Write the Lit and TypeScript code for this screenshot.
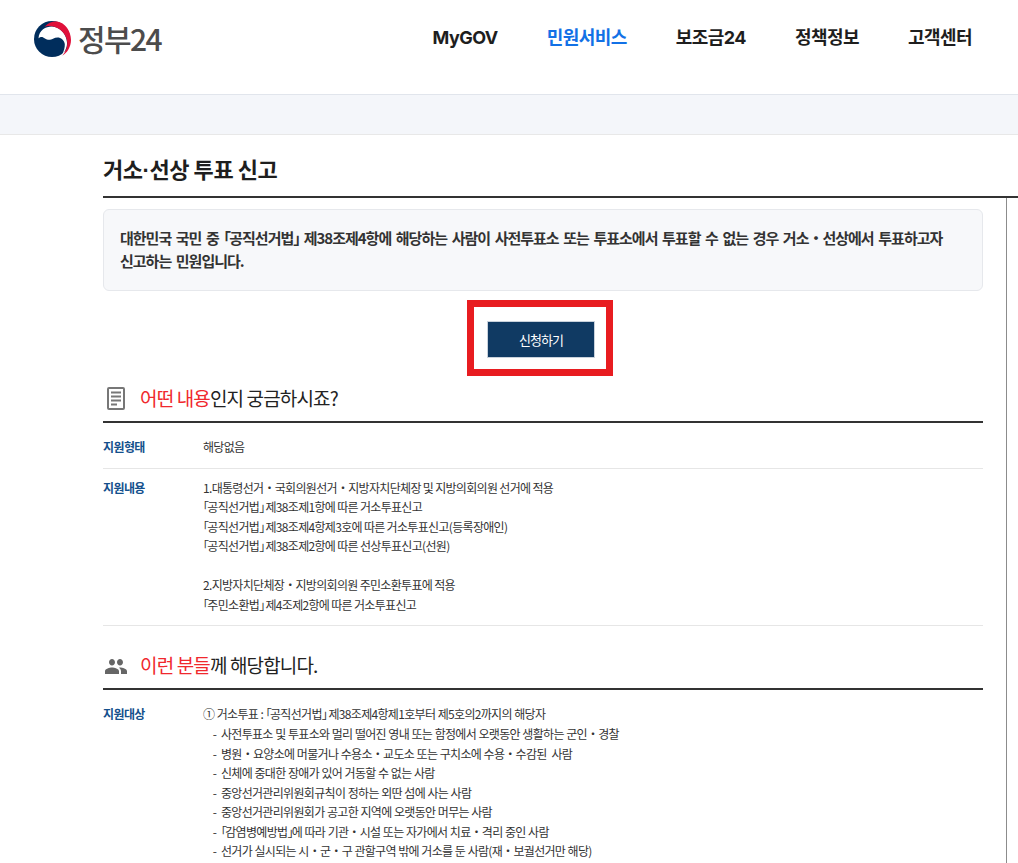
import { LitElement, html, css } from "lit";
import { customElement } from "lit/decorators.js";

const SUPPORT = [
  "1.대통령선거・국회의원선거・지방자치단체장 및 지방의회의원 선거에 적용",
  "「공직선거법」 제38조제1항에 따른 거소투표신고",
  "「공직선거법」 제38조제4항제3호에 따른 거소투표신고(등록장애인)",
  "「공직선거법」 제38조제2항에 따른 선상투표신고(선원)",
  "",
  "2.지방자치단체장・지방의회의원 주민소환투표에 적용",
  "「주민소환법」 제4조제2항에 따른 거소투표신고",
];
const TARGET = [
  "① 거소투표 : 「공직선거법」 제38조제4항제1호부터 제5호의2까지의 해당자",
  "    -  사전투표소 및 투표소와 멀리 떨어진 영내 또는 함정에서 오랫동안 생활하는 군인・경찰",
  "    -  병원・요양소에 머물거나 수용소・교도소 또는 구치소에 수용・수감된  사람",
  "    -  신체에 중대한 장애가 있어 거동할 수 없는 사람",
  "    -  중앙선거관리위원회규칙이 정하는 외딴 섬에 사는 사람",
  "    -  중앙선거관리위원회가 공고한 지역에 오랫동안 머무는 사람",
  "    -  「감염병예방법」에 따라 기관・시설 또는 자가에서 치료・격리 중인 사람",
  "    -  선거가 실시되는 시・군・구 관할구역 밖에 거소를 둔 사람(재・보궐선거만 해당)",
];

/** Renders a line with its corner brackets at half width, as the reference sets them. */
const brk = (s: string) =>
  s.split(/([「」])/).map((p) => (p === "「" || p === "」" ? html`<span class="br">${p}</span>` : p));

@customElement("app-root")
export class AppRoot extends LitElement {
  static styles = css`
    :host {
      display: block;
      height: 863px;
      overflow: hidden;
      background: #fff;
      font-family: "Noto Sans CJK KR", "Noto Sans", sans-serif;
      color: #1e1e1e;
    }
    .br { font-feature-settings: "halt"; letter-spacing: -1.7px; }
    .header {
      height: 94px;
      display: flex;
      justify-content: space-between;
      padding: 20px 46px 0 33px;
      box-sizing: border-box;
    }
    .logo {
      display: flex;
      align-items: flex-start;
      gap: 7px;
      height: 38px;
    }
    .logo-text {
      font-family: "Noto Sans CJK KR", sans-serif;
      font-size: 30px;
      line-height: 36px;
      letter-spacing: -1.6px;
      color: #4c4c4c;
      font-weight: 500;
    }
    nav {
      display: flex;
      gap: 49px;
      font-family: Inter, "Noto Sans CJK KR", sans-serif;
      font-size: 18px;
      font-weight: 700;
      line-height: 36px;
      letter-spacing: -0.55px;
      color: #1e1e1e;
    }
    nav .on { color: #1271e6; }
    .band {
      height: 41px;
      box-sizing: border-box;
      background: #f4f6fa;
      border-top: 1px solid #e1e5ec;
      border-bottom: 1px solid #e8e8e8;
    }
    .page { padding-left: 103px; }
    h1 {
      margin: 0;
      height: 63px;
      box-sizing: border-box;
      border-bottom: 2px solid #333;
      padding-top: 15px;
      font-size: 22px;
      line-height: 36px;
      font-weight: 700;
      letter-spacing: -0.45px;
      color: #1e1e1e;
    }
    h1 .dot { font-family: "Liberation Sans", sans-serif; }
    .rail {
      width: 904px;
      box-sizing: border-box;
      border-right: 1px solid #8c8c8c;
      padding-right: 23px;
      padding-top: 11px;
      height: 700px;
    }
    .intro {
      height: 82px;
      box-sizing: border-box;
      background: #f7f8fa;
      border: 1px solid #e6e8ec;
      border-radius: 6px;
      padding: 16px 16px;
      font-size: 15px;
      font-weight: 700;
      line-height: 23px;
      letter-spacing: -1px;
      word-spacing: 2.2px;
      color: #333;
    }
    .actions {
      position: relative;
      display: flex;
      justify-content: center;
      padding-top: 30px;
      height: 78px;
      box-sizing: border-box;
    }
    .apply {
      width: 108px;
      height: 37px;
      margin-right: 4px;
      box-sizing: border-box;
      background: #103a63;
      border: 1px solid #c9d2dc;
      color: #fff;
      font: 400 13px/35px "Noto Sans CJK KR", sans-serif;
      letter-spacing: -0.9px;
      padding: 0;
    }
    .mark {
      position: absolute;
      left: 364px;
      top: 9px;
      width: 146px;
      height: 76px;
      box-sizing: border-box;
      border: 7px solid #e81c20;
      pointer-events: none;
    }
    .sec-head {
      display: flex;
      align-items: center;
      height: 54px;
      box-sizing: border-box;
      border-bottom: 2px solid #333;
      padding-top: 4px;
      font-size: 19px;
      letter-spacing: -0.85px;
      color: #222;
      font-weight: 400;
      margin: 0;
    }
    .sec-head.sec2 { height: 64px; padding-top: 14px; }
    .sec-icon {
      width: 37px;
      display: flex;
      padding-left: 4px;
      padding-top: 2px;
      box-sizing: border-box;
      flex: none;
    }
    .sec2 .sec-icon { padding-left: 2px; padding-top: 4px; }
    .sec-head em { font-style: normal; color: #f0282d; }
    .row {
      display: grid;
      grid-template-columns: 100px 1fr;
      font-size: 12px;
      line-height: 19.5px;
      letter-spacing: -0.68px;
      border-bottom: 1px solid #e6e6e6;
      padding: 9px 0 11px;
      color: #333;
    }
    .row.first { padding: 14px 0 11px; }
    .row.last { border-bottom: 0; padding-top: 14px; word-spacing: 0.4px; }
    .label {
      font-weight: 700;
      color: #14508c;
      letter-spacing: -0.6px;
    }
    .lines { white-space: pre; min-height: 19.5px; }
    .line { height: 19.57px; }
  `;

  render() {
    return html`
      <header class="header">
        <div class="logo">
          <svg width="38" height="38" viewBox="0 0 38 38" aria-hidden="true">
            <circle cx="19" cy="19" r="18" fill="#002d5c"/>
            <path d="M5.5 18.500C6 10 13 6.500 19 6.600C27 7 33.500 14 34 22.500C34.300 27 32 32 29 35C31 31 32 27 31.800 24C31 20 28 17.500 24.500 17.500C21 17.500 20 19.500 17 19.800C13 20.200 11 17 8.500 17C7.500 17 6 17.500 5.500 18.500Z" fill="#fff"/>
            <path d="M11.700 6.700C15 2.500 20 1 24 1.500C32 2.500 38 11 38 20C38 27 34 33 29.300 35.700C32.500 32 34.500 27 34.300 23C34 15 28 8.500 20.500 6.500C17 5.700 14 5.800 11.700 6.700Z" fill="#e0103a"/>
          </svg>
          <span class="logo-text">정부24</span>
        </div>
        <nav>
          <span>MyGOV</span>
          <span class="on">민원서비스</span>
          <span>보조금24</span>
          <span>정책정보</span>
          <span>고객센터</span>
        </nav>
      </header>
      <div class="band"></div>
      <main class="page">
        <h1>거소<span class="dot">·</span>선상 투표 신고</h1>
        <div class="rail">
          <div class="intro">대한민국 국민 중 ${brk("「공직선거법」")} 제38조제4항에 해당하는 사람이 사전투표소 또는 투표소에서 투표할 수 없는 경우 거소・선상에서 투표하고자<br />신고하는 민원입니다.</div>
          <div class="actions">
            <button class="apply">신청하기</button>
            <div class="mark"></div>
          </div>
          <h2 class="sec-head">
            <span class="sec-icon">
              <svg width="18" height="23" viewBox="0 0 18 23" fill="none" stroke="#777" stroke-width="2" aria-hidden="true">
                <rect x="1" y="1" width="16" height="21" rx="1"/>
                <path d="M4 5.500h10M4 9.500h10M4 13.500h10M4 17.500h6"/>
              </svg>
            </span>
            <span><em>어떤 내용</em>인지 궁금하시죠?</span>
          </h2>
          <div class="row first">
            <div class="label">지원형태</div>
            <div class="lines">해당없음</div>
          </div>
          <div class="row">
            <div class="label">지원내용</div>
            <div class="lines">${SUPPORT.map((l) => html`<div class="line">${brk(l)}</div>`)}</div>
          </div>
          <h2 class="sec-head sec2">
            <span class="sec-icon">
              <svg width="22" height="15" viewBox="1 5 22 14" preserveAspectRatio="none" fill="#666" aria-hidden="true">
                <path d="M16 11c1.660 0 2.990-1.340 2.990-3S17.660 5 16 5c-1.660 0-3 1.340-3 3s1.340 3 3 3zm-8 0c1.660 0 2.990-1.340 2.990-3S9.660 5 8 5C6.340 5 5 6.340 5 8s1.340 3 3 3zm0 2c-2.330 0-7 1.170-7 3.500V19h14v-2.500c0-2.330-4.670-3.500-7-3.500zm8 0c-.29 0-.62.02-.97.05 1.160.84 1.970 1.970 1.970 3.450V19h6v-2.500c0-2.330-4.670-3.500-7-3.500z"/>
              </svg>
            </span>
            <span><em>이런 분들</em>께 해당합니다.</span>
          </h2>
          <div class="row last">
            <div class="label">지원대상</div>
            <div class="lines">${TARGET.map((l) => html`<div class="line">${brk(l)}</div>`)}</div>
          </div>
        </div>
      </main>
    `;
  }
}
